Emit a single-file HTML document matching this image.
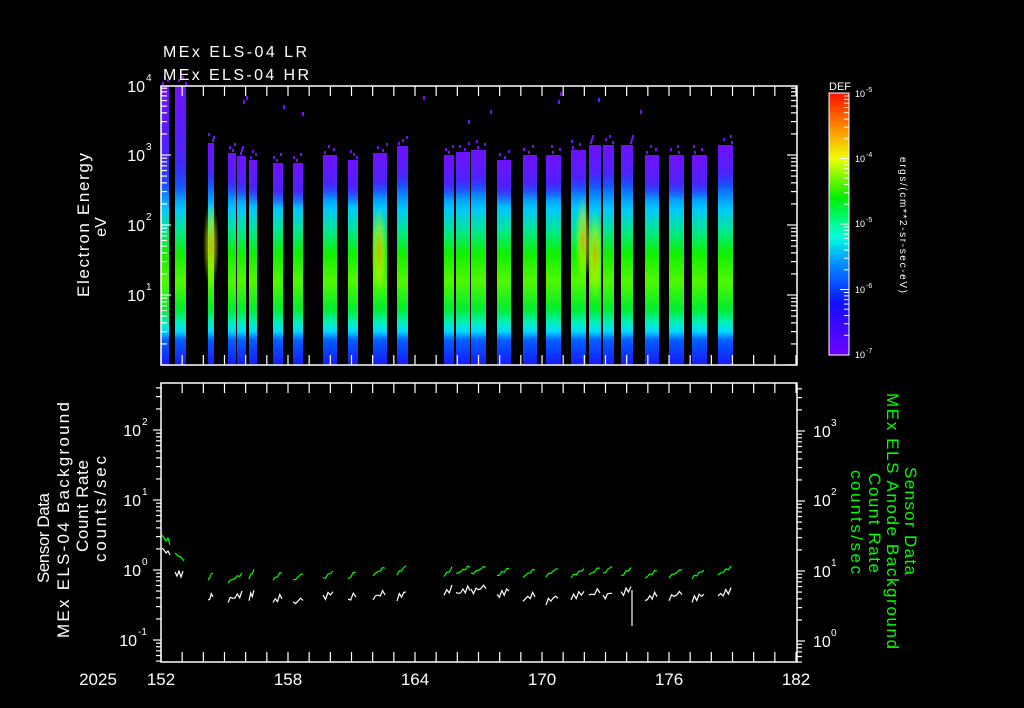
<!DOCTYPE html>
<html><head><meta charset="utf-8"><style>
html,body{margin:0;padding:0;background:#000;width:1024px;height:708px;overflow:hidden}
svg{display:block}
text{font-family:"Liberation Sans","DejaVu Sans",sans-serif;fill:#fff}
</style></head><body>
<svg id="s" width="1024" height="708" viewBox="0 0 1024 708" xmlns="http://www.w3.org/2000/svg">
<defs>
<linearGradient id="bg" gradientUnits="userSpaceOnUse" x1="0" y1="86" x2="0" y2="365">
<stop offset="0" stop-color="#5010ff"/>
<stop offset="0.25" stop-color="#3030ff"/>
<stop offset="0.36" stop-color="#1060ff"/>
<stop offset="0.44" stop-color="#00c8ff"/>
<stop offset="0.52" stop-color="#00e890"/>
<stop offset="0.6" stop-color="#10f000"/>
<stop offset="0.7" stop-color="#50f800"/>
<stop offset="0.8" stop-color="#00ee30"/>
<stop offset="0.85" stop-color="#00f0c0"/>
<stop offset="0.88" stop-color="#00d8ff"/>
<stop offset="0.91" stop-color="#0060ff"/>
<stop offset="1" stop-color="#1818ff"/>
</linearGradient>
<linearGradient id="cb" x1="0" y1="1" x2="0" y2="0">
<stop offset="0" stop-color="#7000ff"/>
<stop offset="0.2" stop-color="#1010ff"/>
<stop offset="0.35" stop-color="#0090ff"/>
<stop offset="0.45" stop-color="#00ffe0"/>
<stop offset="0.6" stop-color="#00f000"/>
<stop offset="0.75" stop-color="#f0ff00"/>
<stop offset="0.88" stop-color="#ff8000"/>
<stop offset="1" stop-color="#ff1000"/>
</linearGradient>
<linearGradient id="tp" x1="0" y1="0" x2="0" y2="1">
<stop offset="0" stop-color="#7010ff"/>
<stop offset="0.6" stop-color="#5020ff"/>
<stop offset="1" stop-color="#3030ff" stop-opacity="0"/>
</linearGradient>
<radialGradient id="hot"><stop offset="0" stop-color="#ffa000" stop-opacity="0.8"/><stop offset="0.5" stop-color="#e0f000" stop-opacity="0.5"/><stop offset="1" stop-color="#c0ff00" stop-opacity="0"/></radialGradient>
</defs>
<g id="bars"></g>
<g id="ticks" stroke="#fff" stroke-width="1.2" fill="none"></g>
<rect x="161" y="86" width="636" height="279" fill="none" stroke="#fff" stroke-width="1.5"/>
<rect x="161" y="383" width="636" height="279" fill="none" stroke="#fff" stroke-width="1.5"/>
<g id="data" fill="none" stroke-width="1.2"></g>

<text x="163" y="57" font-size="16" textLength="144">MEx ELS-04 LR</text>
<text x="163" y="80" font-size="16" textLength="146">MEx ELS-04 HR</text>

<g font-size="16" text-anchor="end">
<text x="145" y="92">10</text><text x="146" y="81" font-size="10" text-anchor="start">4</text>
<text x="145" y="161">10</text><text x="146" y="150" font-size="10" text-anchor="start">3</text>
<text x="145" y="231">10</text><text x="146" y="220" font-size="10" text-anchor="start">2</text>
<text x="145" y="301">10</text><text x="146" y="290" font-size="10" text-anchor="start">1</text>
<text x="141" y="436">10</text><text x="142" y="425" font-size="10" text-anchor="start">2</text>
<text x="141" y="506">10</text><text x="142" y="495" font-size="10" text-anchor="start">1</text>
<text x="141" y="576">10</text><text x="142" y="565" font-size="10" text-anchor="start">0</text>
<text x="137" y="646">10</text><text x="138" y="635" font-size="10" text-anchor="start">-1</text>
</g>
<g font-size="16">
<text x="813" y="437">10</text><text x="831" y="426" font-size="10">3</text>
<text x="813" y="506">10</text><text x="831" y="495" font-size="10">2</text>
<text x="813" y="577">10</text><text x="831" y="566" font-size="10">1</text>
<text x="813" y="647">10</text><text x="831" y="636" font-size="10">0</text>
</g>
<g font-size="17" text-anchor="middle">
<text x="98" y="685">2025</text>
<text x="161" y="685">152</text>
<text x="288" y="685">158</text>
<text x="415" y="685">164</text>
<text x="542" y="685">170</text>
<text x="669" y="685">176</text>
<text x="796" y="685">182</text>
</g>

<g font-size="17" text-anchor="middle">
<text transform="translate(89,225) rotate(-90)" textLength="144">Electron Energy</text>
<text transform="translate(106,227) rotate(-90)" font-size="16">eV</text>
<text transform="translate(49,538) rotate(-90)" textLength="90">Sensor Data</text>
<text transform="translate(69,520) rotate(-90)" textLength="236">MEx ELS-04 Background</text>
<text transform="translate(88,506) rotate(-90)" textLength="92">Count Rate</text>
<text transform="translate(106,509) rotate(-90)" textLength="106">counts/sec</text>
</g>
<g font-size="17" text-anchor="middle">
<text transform="translate(905,521) rotate(90)" textLength="108" style="fill:#00ff00">Sensor Data</text>
<text transform="translate(887,521) rotate(90)" textLength="256" style="fill:#00ff00">MEx ELS Anode Background</text>
<text transform="translate(869,523) rotate(90)" textLength="100" style="fill:#00ff00">Count Rate</text>
<text transform="translate(851,522) rotate(90)" textLength="104" style="fill:#00ff00">counts/sec</text>
</g>

<rect x="829" y="93" width="20" height="262" fill="url(#cb)" stroke="#fff" stroke-width="1"/>
<g id="cbt" stroke="#fff" stroke-width="1"></g>
<text x="829" y="90" font-size="11">DEF</text>
<g font-size="9">
<text x="855" y="97">10</text><text x="866" y="92" font-size="7">-5</text>
<text x="855" y="162">10</text><text x="866" y="157" font-size="7">-4</text>
<text x="855" y="227">10</text><text x="866" y="222" font-size="7">-5</text>
<text x="855" y="293">10</text><text x="866" y="288" font-size="7">-6</text>
<text x="855" y="358">10</text><text x="866" y="353" font-size="7">-7</text>
</g>
<text transform="translate(900,225) rotate(90)" font-size="10" text-anchor="middle" textLength="136">ergs/(cm**2-sr-sec-eV)</text>
</svg>
<script>
var NS="http://www.w3.org/2000/svg";
function el(p,t,a){var e=document.createElementNS(NS,t);for(var k in a)e.setAttribute(k,a[k]);p.appendChild(e);return e;}
var B=document.getElementById("bars"),T=document.getElementById("ticks"),D=document.getElementById("data"),C=document.getElementById("cbt");
var bars=[[161,169,86],[175,186,86],[208,214,143],[228,236,153],[237,246,156],[249,257,160],[273,283,163],[293,303,163],[323,337,155],[348,358,160],[373,387,153],[397,408,146],[444,454,155],[456,470,152],[471,486,150],[497,511,160],[523,537,155],[546,561,155],[571,586,150],[589,601,145],[603,614,145],[621,633,145],[645,659,155],[669,684,155],[692,707,155],[718,733,145]];
var hot=[[211,245],[379,250],[595,255],[583,240]];
bars.forEach(function(b){
 el(B,"rect",{x:b[0],y:b[2],width:b[1]-b[0],height:365-b[2],fill:"url(#bg)"});
 el(B,"rect",{x:b[0],y:b[2],width:b[1]-b[0],height:b[2]<100?110:45,fill:"url(#tp)"});
 for(var i=0;i<3;i++){var xx=b[0]+((i*37+b[0])%(b[1]-b[0]));el(B,"rect",{x:xx,y:b[2]-4-i*3,width:2,height:3,fill:"#7010ff"});}
});
hot.forEach(function(h){el(B,"ellipse",{cx:h[0],cy:h[1],rx:8,ry:45,fill:"url(#hot)"});});
[[243,100],[283,105],[302,112],[423,96],[468,120],[490,110],[560,92],[598,98],[640,110],[246,96],[558,100]].forEach(function(p){el(B,"rect",{x:p[0],y:p[1],width:2,height:4,fill:"#7010ff"});});
for(var d=0;d<=30;d++){var x=161+d*635/30;
 el(T,"line",{x1:x,y1:365,x2:x,y2:355});el(T,"line",{x1:x,y1:86,x2:x,y2:96});
 el(T,"line",{x1:x,y1:662,x2:x,y2:652});el(T,"line",{x1:x,y1:383,x2:x,y2:393});}
function logt(y0,ymin,ymax,x,dir,maj,min){
 for(var dec=-3;dec<6;dec++){for(var k=1;k<10;k++){var y=y0-70*(dec+Math.log10(k));if(y<ymin-0.5||y>ymax+0.5)continue;var L=k==1?maj:min;el(T,"line",{x1:x,y1:y,x2:x+dir*L,y2:y});}}}
logt(365,86,365,161,1,10,6);logt(365,86,365,797,-1,10,6);
logt(570,383,662,161,-1,8,5);logt(641,383,662,797,1,8,5);
for(var dec=0;dec<4;dec++)for(var k=1;k<10;k++){var y=355-65.5*(dec+Math.log10(k));var L=k==1?9:5;el(C,"line",{x1:849,y1:y,x2:849-L,y2:y});}
function seg(x1,x2,yg,yw,s){var g="",w="";var n=Math.max(3,Math.round((x2-x1)/2.5));for(var i=0;i<=n;i++){var x=x1+(x2-x1)*i/n;var r=Math.sin(i*2.7+s);g+=x.toFixed(1)+","+(yg-i*8/n+r*1.2).toFixed(1)+" ";w+=x.toFixed(1)+","+(yw-i*6/n+r*3).toFixed(1)+" ";}
 el(D,"polyline",{points:g,stroke:"#00ff00"});el(D,"polyline",{points:w,stroke:"#fff"});}
el(D,"polyline",{points:"162,535 164,538 166,541 168,538 170,545",stroke:"#00ff00"});
el(D,"polyline",{points:"162,548 164,550 166,553 168,551 170,555",stroke:"#fff"});
el(D,"polyline",{points:"175,553 178,556 181,557 184,561",stroke:"#00ff00"});
el(D,"polyline",{points:"175,572 177,576 179,571 181,577 183,571",stroke:"#fff"});
var segs=[[208,213,580,600],[228,242,582,600],[249,254,578,598],[273,282,580,602],[293,303,581,604],[323,333,579,598],[348,356,579,600],[373,385,575,598],[397,406,574,598],[444,452,576,594],[456,470,574,594],[471,486,574,592],[497,509,576,596],[523,535,577,600],[546,558,576,602],[571,584,577,598],[589,600,575,596],[603,612,574,598],[621,631,576,594],[645,657,578,600],[669,682,577,598],[692,704,578,600],[718,731,575,596]];
segs.forEach(function(s,i){seg(s[0],s[1],s[2],s[3],i);});
el(D,"line",{x1:632,y1:590,x2:632,y2:626,stroke:"#fff"});
</script>
</body></html>
